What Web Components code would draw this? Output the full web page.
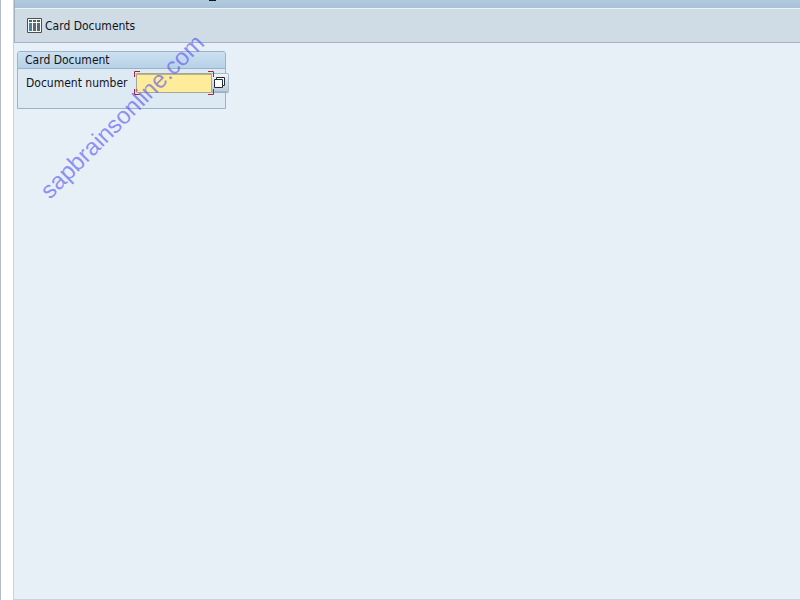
<!DOCTYPE html>
<html lang="en">
<head>
<meta charset="utf-8">
<meta name="viewport" content="width=device-width, initial-scale=1">
<title>Card Document</title>
<style>
html, body { height: 100%; margin: 0; }
body { overflow: hidden; background: #fff; color: #101418; font: 12px/16px "DejaVu Sans Condensed", "DejaVu Sans", sans-serif; }
</style>
</head>
<body>
<sap-window>
  <sap-title-bar slot="title"></sap-title-bar>
  <sap-toolbar slot="toolbar"><sap-tool-button>Card Documents</sap-tool-button></sap-toolbar>
  <sap-group heading="Card Document">
    <sap-field label="Document number"></sap-field>
  </sap-group>
  <sap-watermark slot="overlay">sapbrainsonline.com</sap-watermark>
</sap-window>
<script>
const define = (name, html, setup) => customElements.define(name, class extends HTMLElement {
  constructor() {
    super();
    this.attachShadow({ mode: "open" }).innerHTML = html;
  }
  connectedCallback() { if (setup) setup(this, this.shadowRoot); }
});

define("sap-window", `
<style>
:host { display: flex; box-sizing: border-box; height: 100vh; padding-left: 12px; border-left: 1px solid #b4bcca; position: relative; }
main { flex: 1; min-width: 0; display: flex; flex-direction: column; border: solid #c9d4da; border-width: 0 0 1px 1px; background: #e7f0f7; box-sizing: border-box; }
.content { flex: 1; padding: 8px 3px; }
</style>
<main>
  <slot name="title"></slot>
  <slot name="toolbar"></slot>
  <div class="content"><slot></slot></div>
</main>
<slot name="overlay"></slot>`);

define("sap-title-bar", `
<style>
:host { display: block; height: 9px; margin-left: 1px; padding-left: 194px; box-sizing: border-box; background: linear-gradient(#b2cae0, #a9c1d5); border-bottom: 1px solid #eaf4fa; box-shadow: -1px 0 #9dafc0; }
svg { display: block; }
</style>
<svg width="7" height="1" viewBox="0 0 7 1" aria-hidden="true"><path d="M0 0H7V1H0Z" fill="#101418"/></svg>`);

define("sap-toolbar", `
<style>
:host { display: flex; align-items: center; height: 34px; box-sizing: border-box; margin-left: 1px; padding: 0 12px; background: #cfdce6; border-bottom: 1px solid #a3b1c6; box-shadow: -1px 0 #a3b1c6; }
</style>
<slot></slot>`);

define("sap-tool-button", `
<style>
:host { display: block; }
button { display: flex; align-items: center; gap: 3px; padding: 0; border: 0; background: none; color: inherit; font: inherit; }
svg { display: block; }
</style>
<button type="button">
  <svg width="15" height="15" viewBox="0 0 15 15" aria-hidden="true">
    <path d="M.5 .5H14.5V14.5H.5Z" fill="#f4f7f8" stroke="#50504f"/>
    <path d="M2 2H5V4H2ZM6 2H9V4H6ZM10 2H13V4H10Z" fill="#565c60"/>
    <path d="M2 5H5V13H2Z" fill="#43849c"/>
    <path d="M6 5H9V13H6ZM10 5H13V13H10Z" fill="#60666b"/>
  </svg>
  <span><slot></slot></span>
</button>`);

define("sap-group", `
<style>
:host { display: block; width: 209px; box-sizing: border-box; border: 1px solid #98b3cc; border-radius: 3px 3px 0 0; background: #dde9f3; }
h2 { margin: 0; padding: 0 7px; font: inherit; border-bottom: 1px solid #98b3cc; border-radius: 2px 2px 0 0; background: linear-gradient(#cce0f0, #b8d1e7); }
.body { padding: 3px 0 15px 8px; }
</style>
<h2></h2>
<div class="body"><slot></slot></div>`,
(el, root) => { root.querySelector("h2").textContent = el.getAttribute("heading"); });

define("sap-field", `
<style>
:host { display: flex; align-items: center; height: 21px; }
label { width: 110px; flex: none; white-space: nowrap; line-height: 18px; }
.box { position: relative; flex: none; display: flex; }
input { width: 76px; height: 20px; box-sizing: border-box; border: 1px solid #a6a797; box-shadow: inset 0 1px #b9b38c; padding: 0 3px; border-radius: 1px; background: #ffec9b; color: inherit; font: inherit; outline: 0; }
.corners { position: absolute; left: -2px; top: -2px; pointer-events: none; }
button { flex: none; width: 17px; height: 19px; box-sizing: border-box; padding: 0; border: 1px solid #a9b7c8; border-left: 0; border-radius: 0 2px 2px 0; background: linear-gradient(#f1f5f8, #bccbdc); box-shadow: 0 1px #a0aebf; }
button svg { display: block; }
</style>
<label for="number"></label>
<div class="box">
  <input id="number" type="text">
  <svg class="corners" width="80" height="24" viewBox="0 0 80 24" fill="none" stroke="#b32035" aria-hidden="true">
    <path d="M.5 6V.5H6M74 .5H79.5V6M79.5 18V23.5H74M6 23.5H.5V18"/>
  </svg>
</div>
<button type="button" aria-label="Possible entries">
  <svg width="14" height="13" viewBox="0 0 14 13" aria-hidden="true">
    <path d="M4.500 3.500V1.500H12.500V9.500H10.500" fill="#f8fafc" stroke="#222c35"/>
    <path d="M2.500 3.500H10.500V11.500H2.500Z" fill="#fff" stroke="#222c35"/>
  </svg>
</button>`,
(el, root) => { root.querySelector("label").textContent = el.getAttribute("label"); });

define("sap-watermark", `
<style>
:host { position: absolute; left: 49px; top: 180px; font: 24px/24px "Liberation Sans", Arial, sans-serif; color: rgba(84, 80, 240, .62); white-space: nowrap; transform: rotate(-45deg); transform-origin: 0 20px; pointer-events: none; }
</style>
<slot></slot>`);
</script>
</body>
</html>
